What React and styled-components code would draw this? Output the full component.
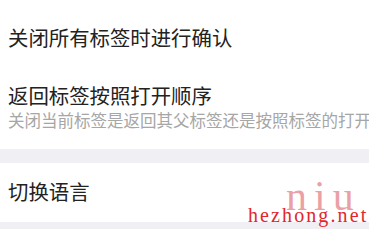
import React from "react";
import styled, { createGlobalStyle } from "styled-components";

const Global = createGlobalStyle`
  html, body { margin: 0; padding: 0; background: #ffffff; }
  body { font-family: "Noto Sans CJK SC", "Noto Sans", sans-serif; overflow: hidden; }
`;

const Page = styled.div`
  position: relative;
  width: 369px;
  height: 229px;
  overflow: hidden;
  background: #efeff4;
`;

const Group = styled.div`
  background: #ffffff;
  display: flex;
  flex-direction: column;
  margin-bottom: ${(p) => p.$gap || 0}px;
`;

const Row = styled.div`
  display: flex;
  flex-direction: column;
  justify-content: center;
  height: ${(p) => p.$h}px;
  padding: ${(p) => p.$pad || "0"};
  padding-left: 8px;
  box-sizing: border-box;
  white-space: nowrap;
  overflow: hidden;
`;

const Title = styled.div`
  font-size: 20.4px;
  line-height: 24px;
  color: #222222;
`;

const Sub = styled.div`
  font-size: 16.5px;
  line-height: 20px;
  color: #a6a6a6;
  margin-top: 3px;
`;

const Watermark = styled.div`
  position: absolute;
  right: 0;
  bottom: 0;
  width: 124px;
  height: 60px;
  pointer-events: none;
`;

const Niu = styled.div`
  position: absolute;
  left: 41px;
  top: 6px;
  font-family: "Liberation Serif", serif;
  font-size: 42px;
  line-height: 42px;
  letter-spacing: 7px;
  color: rgba(222, 96, 106, 0.6);
`;

const Site = styled.div`
  position: absolute;
  left: 3px;
  top: 35px;
  font-family: "Liberation Serif", serif;
  font-size: 20px;
  line-height: 22px;
  letter-spacing: 2.1px;
  color: #e2262c;
`;

export default function App() {
  return (
    <>
      <Global />
      <Page>
        <Group $gap={14}>
          <Row $h={74}>
            <Title>关闭所有标签时进行确认</Title>
          </Row>
          <Row $h={75} $pad="0 0 10px 0">
            <Title>返回标签按照打开顺序</Title>
            <Sub>关闭当前标签是返回其父标签还是按照标签的打开顺序</Sub>
          </Row>
        </Group>
        <Group>
          <Row $h={59} $pad="0 0 3px 0">
            <Title>切换语言</Title>
          </Row>
        </Group>
        <Watermark>
          <Niu>niu</Niu>
          <Site>hezhong.net</Site>
        </Watermark>
      </Page>
    </>
  );
}
